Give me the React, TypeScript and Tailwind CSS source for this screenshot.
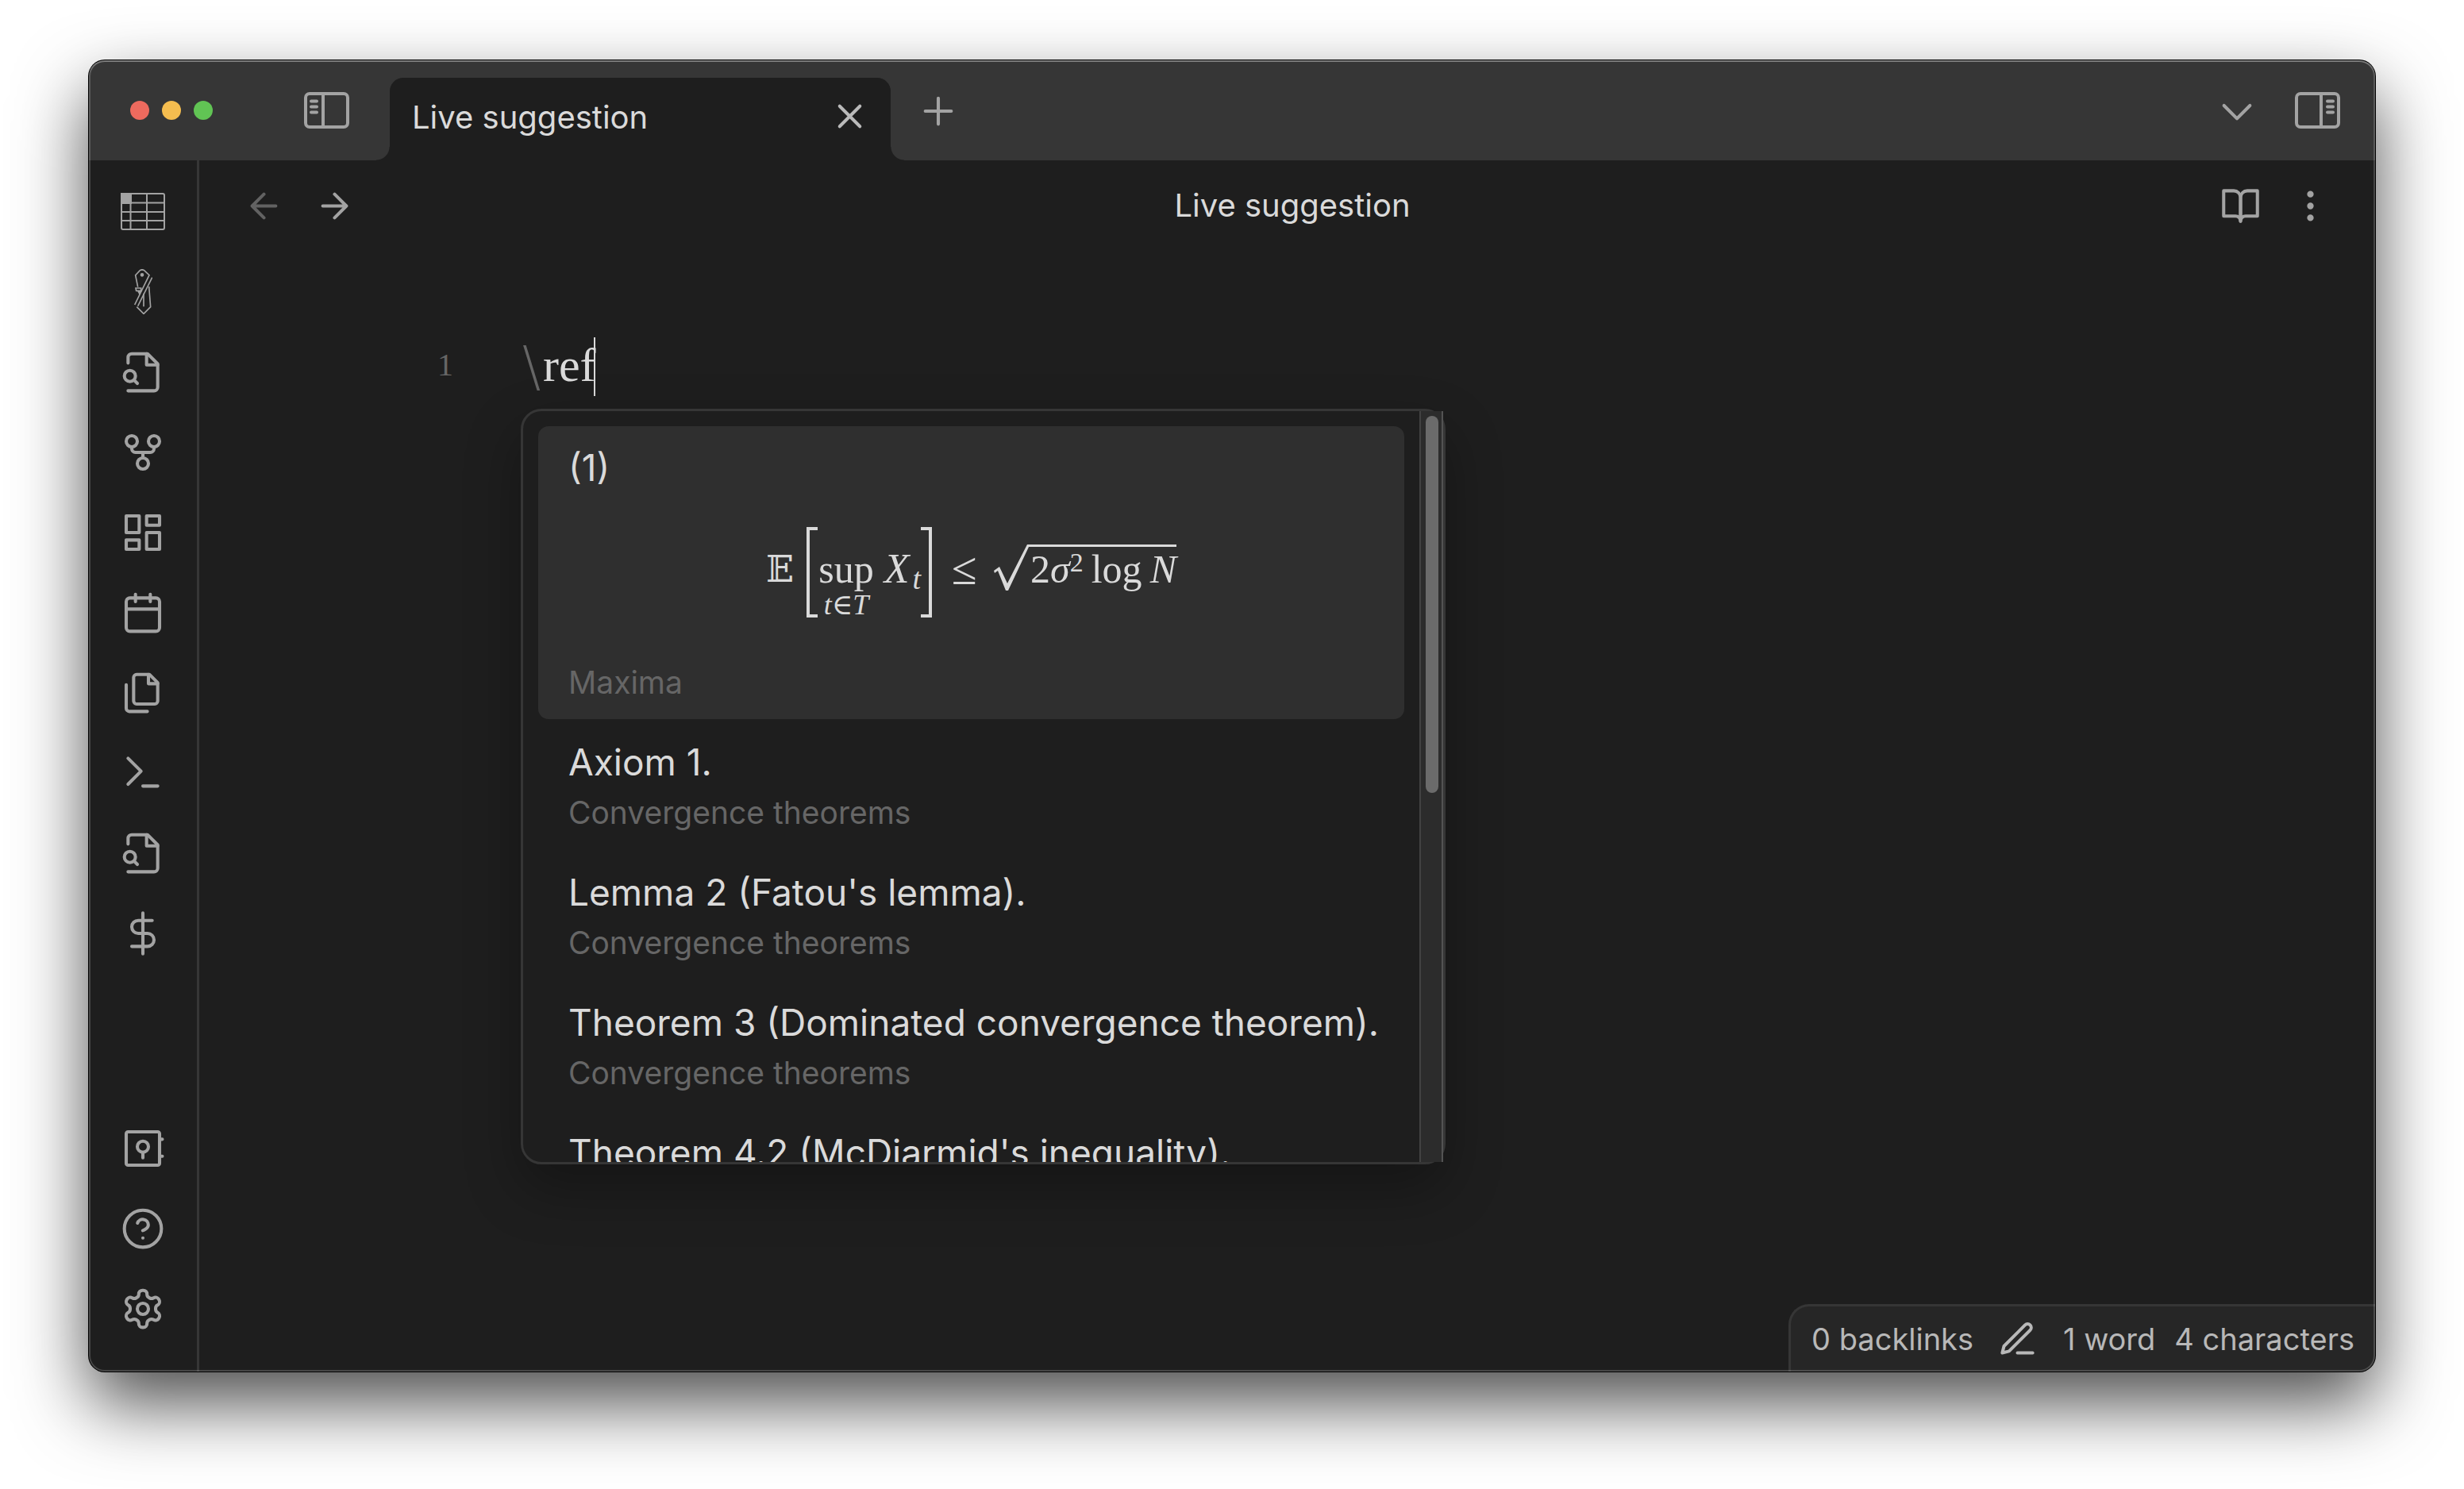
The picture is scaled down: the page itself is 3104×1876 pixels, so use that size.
import type { ReactNode } from "react";

type IconProps = { children: ReactNode; className?: string };

function Icon({ children, className = "size-14 stroke-[1.75]" }: IconProps) {
  return (
    <svg
      viewBox="0 0 24 24"
      fill="none"
      stroke="currentColor"
      strokeLinecap="round"
      strokeLinejoin="round"
      aria-hidden="true"
      className={className}
    >
      {children}
    </svg>
  );
}

const SMALL = "size-[51px] stroke-[1.9]";

function FileSearch() {
  return (
    <Icon>
      <path d="M4 22h14a2 2 0 0 0 2-2V7.5L14.5 2H6a2 2 0 0 0-2 2v3" />
      <path d="M14 2v6h6" />
      <circle cx="5" cy="14" r="3" />
      <path d="m9 18-1.5-1.5" />
    </Icon>
  );
}

function TableIcon() {
  return (
    <svg viewBox="0 0 56 47" fill="none" stroke="currentColor" strokeWidth="2" aria-hidden="true" className="h-[47px] w-14">
      <rect x="1" y="1" width="54" height="45" rx="2" />
      <path d="M1 1h12v12H1z" fill="currentColor" />
      <path d="M12.5 1v45M33 1v45M1 12.5h54M1 24h54M1 35h54" />
    </svg>
  );
}

function KnifeIcon() {
  return (
    <svg viewBox="0 0 69 171" fill="none" stroke="currentColor" strokeWidth="5" aria-hidden="true" className="h-[57px] w-[23px]">
      <path d="M14 68 5 23 22 5q8-5 16 0l19 18L2 135" />
      <path d="M68 32 14 140" />
      <circle cx="30" cy="22" r="4.5" fill="currentColor" />
      <path d="M6 72h20v10H8zM14 82l7 12M22 82l-2 14" />
      <path d="M56 66l6 77-26 26-26-26" />
      <path d="M36 92v50" />
    </svg>
  );
}

function PanelIcon({ side }: { side: "left" | "right" }) {
  return (
    <svg
      viewBox="0 0 57 46"
      fill="none"
      stroke="currentColor"
      strokeWidth="4"
      strokeLinecap="round"
      aria-hidden="true"
      className="h-[46px] w-[57px]"
    >
      <rect x="2" y="2" width="53" height="42" rx="5" />
      {side === "left" ? (
        <path d="M24 3v40M9 11.5h7M9 18.5h7M9 25.5h7" />
      ) : (
        <path d="M33 3v40M41 11.5h7M41 18.5h7M41 25.5h7" />
      )}
    </svg>
  );
}

const topActions: { label: string; icon: ReactNode }[] = [
  { label: "Insert table", icon: <TableIcon /> },
  { label: "Utilities", icon: <KnifeIcon /> },
  { label: "Search files", icon: <FileSearch /> },
  {
    label: "Open graph view",
    icon: (
      <Icon>
        <circle cx="12" cy="18" r="3" />
        <circle cx="6" cy="6" r="3" />
        <circle cx="18" cy="6" r="3" />
        <path d="M18 9v1a2 2 0 0 1-2 2H8a2 2 0 0 1-2-2V9M12 12v3" />
      </Icon>
    ),
  },
  {
    label: "Create canvas",
    icon: (
      <Icon>
        <path d="M3 3h7v9H3zM14 3h7v5h-7zM14 12h7v9h-7zM3 16h7v5H3z" />
      </Icon>
    ),
  },
  {
    label: "Daily note",
    icon: (
      <Icon>
        <rect x="3" y="4" width="18" height="18" rx="2" />
        <path d="M16 2v4M8 2v4M3 10h18" />
      </Icon>
    ),
  },
  {
    label: "Insert template",
    icon: (
      <Icon>
        <path d="M15.5 2H8.6c-.4 0-.8.2-1.1.5-.3.3-.5.7-.5 1.1v12.8c0 .4.2.8.5 1.1.3.3.7.5 1.1.5h9.8c.4 0 .8-.2 1.1-.5.3-.3.5-.7.5-1.1V6.5L15.5 2z" />
        <path d="M3 7.6v12.8c0 .4.2.8.5 1.1.3.3.7.5 1.1.5h9.8M15 2v5h5" />
      </Icon>
    ),
  },
  {
    label: "Command palette",
    icon: (
      <Icon>
        <path d="m4 18 7-7-7-7M12 19h8" />
      </Icon>
    ),
  },
  { label: "Search references", icon: <FileSearch /> },
  {
    label: "Math",
    icon: (
      <Icon>
        <path d="M12 1v22M17 5H9.500a3.500 3.500 0 0 0 0 7h5a3.500 3.500 0 0 1 0 7H6" />
      </Icon>
    ),
  },
];

const bottomActions: { label: string; icon: ReactNode }[] = [
  {
    label: "Open another vault",
    icon: (
      <Icon>
        <rect x="3" y="3" width="18" height="18" rx="1" />
        <circle cx="12" cy="11" r="3" />
        <path d="M12 14v3M21 7h1.500M21 16.200h1.500" />
      </Icon>
    ),
  },
  {
    label: "Help",
    icon: (
      <Icon>
        <circle cx="12" cy="12" r="10" />
        <path d="M9.090 9a3 3 0 0 1 5.830 1c0 2-3 3-3 3M12 17h.01" />
      </Icon>
    ),
  },
  {
    label: "Settings",
    icon: (
      <Icon>
        <path d="M12.22 2h-.44a2 2 0 0 0-2 2v.18a2 2 0 0 1-1 1.73l-.43.25a2 2 0 0 1-2 0l-.15-.08a2 2 0 0 0-2.730.73l-.22.38a2 2 0 0 0 .73 2.730l.15.1a2 2 0 0 1 1 1.720v.51a2 2 0 0 1-1 1.740l-.15.09a2 2 0 0 0-.73 2.730l.22.38a2 2 0 0 0 2.730.73l.15-.08a2 2 0 0 1 2 0l.43.25a2 2 0 0 1 1 1.730V20a2 2 0 0 0 2 2h.44a2 2 0 0 0 2-2v-.18a2 2 0 0 1 1-1.730l.43-.25a2 2 0 0 1 2 0l.15.08a2 2 0 0 0 2.730-.73l.22-.39a2 2 0 0 0-.73-2.730l-.15-.08a2 2 0 0 1-1-1.740v-.5a2 2 0 0 1 1-1.740l.15-.09a2 2 0 0 0 .73-2.730l-.22-.38a2 2 0 0 0-2.730-.73l-.15.08a2 2 0 0 1-2 0l-.43-.25a2 2 0 0 1-1-1.730V4a2 2 0 0 0-2-2z" />
        <circle cx="12" cy="12" r="3" />
      </Icon>
    ),
  },
];

function Ribbon() {
  return (
    <nav aria-label="Ribbon" className="flex w-[139px] shrink-0 flex-col items-center border-r-3 border-[#363636] pt-[22px] pb-[37px] text-[#a3a3a3]">
      <div className="flex flex-col gap-4">
        {topActions.map((a) => (
          <button key={a.label} type="button" aria-label={a.label} className="flex size-[85px] items-center justify-center">
            {a.icon}
          </button>
        ))}
      </div>
      <div className="mt-auto flex flex-col gap-4">
        {bottomActions.map((a) => (
          <button key={a.label} type="button" aria-label={a.label} className="flex size-[85px] items-center justify-center">
            {a.icon}
          </button>
        ))}
      </div>
    </nav>
  );
}

function TitleBar() {
  return (
    <header className="flex h-[126px] shrink-0 items-center bg-[#363636] pr-11 pl-[52px] text-[#a3a3a3]">
      <div className="flex gap-4">
        <button type="button" aria-label="Close window" className="size-6 rounded-full bg-[#ed6a5e]" />
        <button type="button" aria-label="Minimize window" className="size-6 rounded-full bg-[#f5bd4f]" />
        <button type="button" aria-label="Zoom window" className="size-6 rounded-full bg-[#61c454]" />
      </div>
      <button type="button" aria-label="Toggle left sidebar" className="ml-[115px]">
        <PanelIcon side="left" />
      </button>
      <div className="relative ml-[51px] flex h-[104px] w-[631px] items-center justify-between self-end rounded-t-[17px] bg-[#1e1e1e] pr-[26px] pb-1 pl-7">
        <span className="absolute bottom-0 -left-[17px] size-[17px] bg-[radial-gradient(circle_at_0_0,transparent_16px,#1e1e1e_17px)]" />
        <span className="absolute -right-[17px] bottom-0 size-[17px] bg-[radial-gradient(circle_at_100%_0,transparent_16px,#1e1e1e_17px)]" />
        <span className="text-[40px] text-[#dadada]">Live suggestion</span>
        <button type="button" aria-label="Close tab" className="pb-1 text-[#bababa]">
          <Icon className={SMALL}>
            <path d="M18 6 6 18M6 6l12 12" />
          </Icon>
        </button>
      </div>
      <button type="button" aria-label="New tab" className="ml-8 pt-[2px]">
        <Icon>
          <path d="M5 12h14M12 5v14" />
        </Icon>
      </button>
      <button type="button" aria-label="Tab list" className="ml-auto pt-[2px]">
        <Icon>
          <path d="m5 9 7 7 7-7" />
        </Icon>
      </button>
      <button type="button" aria-label="Toggle right sidebar" className="ml-[45px]">
        <PanelIcon side="right" />
      </button>
    </header>
  );
}

function ViewHeader() {
  return (
    <div className="flex h-[114px] shrink-0 items-center justify-between px-14 text-[#a3a3a3]">
      <div className="flex gap-[38px]">
        <button type="button" aria-label="Navigate back" className="text-[#626262]">
          <Icon className={SMALL}>
            <path d="m12 19-7-7 7-7M19 12H5" />
          </Icon>
        </button>
        <button type="button" aria-label="Navigate forward">
          <Icon className={SMALL}>
            <path d="M5 12h14M12 5l7 7-7 7" />
          </Icon>
        </button>
      </div>
      <h1 className="pl-3 text-[40px] text-[#dadada]">Live suggestion</h1>
      <div className="flex gap-[37px]">
        <button type="button" aria-label="Reading view">
          <Icon className={SMALL}>
            <path d="M2 3h6a4 4 0 0 1 4 4v14a3 3 0 0 0-3-3H2z" />
            <path d="M22 3h-6a4 4 0 0 0-4 4v14a3 3 0 0 1 3-3h7z" />
          </Icon>
        </button>
        <button type="button" aria-label="More options">
          <Icon className={SMALL}>
            <circle cx="12" cy="12" r="1" />
            <circle cx="12" cy="5" r="1" />
            <circle cx="12" cy="19" r="1" />
          </Icon>
        </button>
      </div>
    </div>
  );
}

const SERIF = "font-['Liberation_Serif','DejaVu_Serif',serif]";

function Formula() {
  return (
    <span className={`${SERIF} flex h-[114px] items-start justify-center text-[50px] leading-[50px]`}>
      <span className="w-[51px] pt-7 font-['DejaVu_Serif','DejaVu_Sans',serif] text-[46px]">𝔼</span>
      <span className="h-[114px] w-[14px] border-y-4 border-l-4 border-[#dadada]" />
      <span className="flex w-[72px] flex-col items-center pt-7">
        <span>sup</span>
        <span className="mt-[3px] text-[36px] leading-[34px]">
          <i>t</i>∈<i>T</i>
        </span>
      </span>
      <span className="flex w-[58px] items-start justify-end pt-7">
        <i className="text-[52px]">X</i>
        <i className="pt-5 pl-1 text-[38px] leading-[34px]">t</i>
      </span>
      <span className="h-[114px] w-[14px] border-y-4 border-r-4 border-[#dadada]" />
      <span className="w-[78px] pt-7 pl-1 text-center text-[58px]">≤</span>
      <svg viewBox="0 0 46 58" fill="currentColor" aria-hidden="true" className="mt-[22px] h-[58px] w-[46px]">
        <path d="M0 33 7 28 17 49 42 0H46V3H44L18 58H15L5 33 1 36Z" />
      </svg>
      <span className="mt-[22px] flex w-[184px] items-start justify-between border-t-3 border-[#dadada] pt-[3px]">
        <span className="flex items-start">
          2<i>σ</i>
          <span className="text-[34px] leading-[34px]">2</span>
        </span>
        <span>log</span>
        <i>N</i>
      </span>
    </span>
  );
}

const suggestions = [
  { title: "Axiom 1.", source: "Convergence theorems" },
  { title: "Lemma 2 (Fatou's lemma).", source: "Convergence theorems" },
  { title: "Theorem 3 (Dominated convergence theorem).", source: "Convergence theorems" },
  { title: "Theorem 4.2 (McDiarmid's inequality)." },
];

function SuggestionPopup() {
  return (
    <div className="absolute top-full left-0 mt-4 flex h-[952px] w-[1165px] rounded-[26px] border-3 border-[#363636] bg-[#1e1e1e] text-[#dadada] shadow-[0_30px_70px_rgba(0,0,0,0.3)]">
      <div role="listbox" aria-label="Suggestions" className="flex-1 overflow-hidden rounded-l-[23px] p-[19px]">
        <button type="button" role="option" aria-selected="true" className="flex h-[369px] w-full flex-col rounded-[13px] bg-[#2f2f2f] px-[38px] pt-6 text-left">
          <span className="block text-[46px] leading-[56px]">(1)</span>
          <span className="mt-[47px] block">
            <Formula />
          </span>
          <span className="mt-[58px] block text-[39px] leading-[48px] text-[#666666]">Maxima</span>
        </button>
        {suggestions.map((s) => (
          <button key={s.title} type="button" role="option" aria-selected="false" className="flex h-[164px] w-full flex-col px-[38px] pt-[26px] text-left whitespace-nowrap">
            <span className="block text-[46px] leading-[56px]">{s.title}</span>
            {s.source && <span className="mt-3 block text-[39px] leading-[48px] text-[#666666]">{s.source}</span>}
          </button>
        ))}
      </div>
      <div className="w-[30px] border-r-2 border-l-2 border-r-[#535353] border-l-[#424242] bg-[#2c2c2c] pt-[6px] pl-[6px]">
        <div className="h-[475px] w-4 rounded-full bg-[#6b6b6b]" />
      </div>
    </div>
  );
}

function Editor() {
  return (
    <div className={`${SERIF} mt-[109px] flex flex-1 items-start`}>
      <span className="w-[320px] text-right text-[40px] leading-[70px] text-[#666666]">1</span>
      <div className="relative ml-[85px] h-[74px]">
        <div role="textbox" aria-label="Note" className="flex h-[74px] text-[60px] leading-[70px] text-[#dadada]">
          <span className="w-7 pl-[2px] font-['DejaVu_Sans',sans-serif] text-[69px] leading-[74px] font-extralight text-[#666666]">\</span>
          <span>ref</span>
          <span className="-ml-[3px] h-[74px] w-[2px] bg-[#dadada]" />
        </div>
        <div className="font-['Inter','Liberation_Sans',sans-serif]">
          <SuggestionPopup />
        </div>
      </div>
    </div>
  );
}

function StatusBar() {
  return (
    <footer className="flex h-[85px] items-center self-end rounded-tl-[26px] border-t-3 border-l-3 border-[#363636] bg-[#262626] pr-[26px] pl-[26px] text-[38px] text-[#b8b8b8]">
      <span>0 backlinks</span>
      <Icon className="ml-[30px] size-[51px] stroke-[1.9]">
        <path d="M12 20h9M16.500 3.500a2.120 2.120 0 0 1 3 3L7 19l-4 1 1-4Z" />
      </Icon>
      <span className="ml-8">1 word</span>
      <span className="ml-6">4 characters</span>
    </footer>
  );
}

export default function App() {
  return (
    <div className="flex min-h-screen bg-white px-28 pt-[76px] pb-[148px] font-['Inter','Liberation_Sans',sans-serif]">
      <div className="relative flex flex-1 flex-col overflow-hidden rounded-[20px] bg-[#1e1e1e] shadow-[0_0_0_1px_#000,0_40px_90px_rgba(0,0,0,0.7)]">
        <TitleBar />
        <div className="flex flex-1">
          <Ribbon />
          <main className="flex flex-1 flex-col">
            <ViewHeader />
            <Editor />
            <StatusBar />
          </main>
        </div>
        <div className="pointer-events-none absolute inset-0 rounded-[20px] shadow-[inset_0_2px_0_rgba(255,255,255,0.2),inset_0_0_0_2px_rgba(255,255,255,0.18)]" />
      </div>
    </div>
  );
}
